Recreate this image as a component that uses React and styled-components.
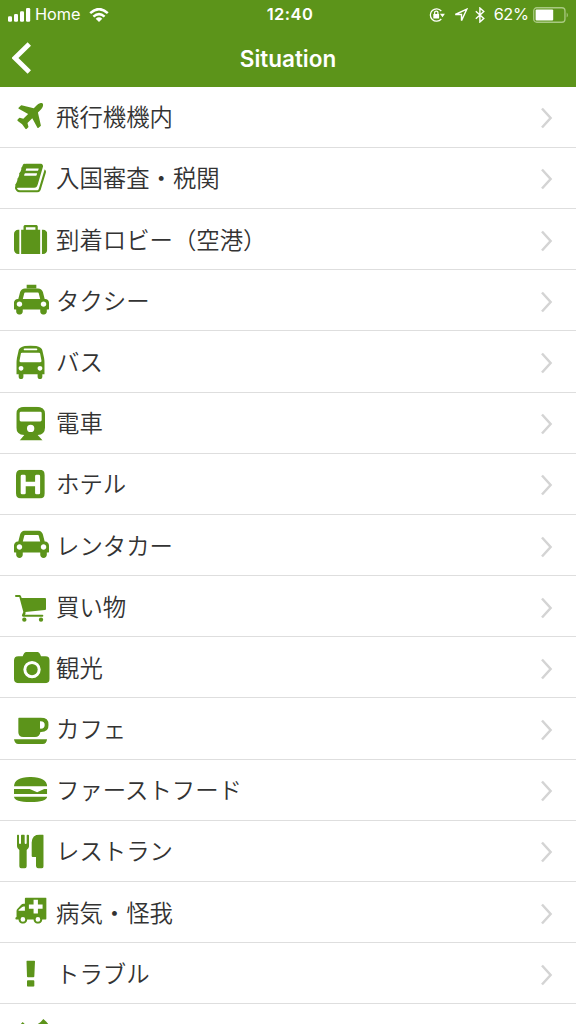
import React from "react";
import styled, { createGlobalStyle } from "styled-components";

const CAR =
  "M480 1088q0-66-47-113t-113-47-113 47-47 113 47 113 113 47 113-47 47-113zm36-320h1016l-89-357q-2-8-14-17.5t-21-9.5h-768q-9 0-21 9.5t-14 17.5zm1372 320q0-66-47-113t-113-47-113 47-47 113 47 113 113 47 113-47 47-113zm160-96v384q0 14-9 23t-23 9h-96v128q0 80-56 136t-136 56-136-56-56-136v-128h-1024v128q0 80-56 136t-136 56-136-56-56-136v-128h-96q-14 0-23-9t-9-23v-384q0-93 65.5-158.5t158.5-65.5h28l105-419q23-94 104-157.5t179-63.5h768q98 0 179 63.5t104 157.5l105 419h28q93 0 158.5 65.5t65.5 158.5z";

// left / top / width / height of each icon inside its row
const situations = [
  {
    label: "飛行機機内",
    frame: [17.2, 17, 26, 26.2],
    viewBox: "191 136 1405 1400",
    icon: (
      <path d="M1568 160q44 52 12 148t-108 172l-161 161 160 696q5 19-12 33l-128 96q-7 6-19 6-4 0-7-1-15-3-21-16l-279-508-259 259 53 194q5 17-8 31l-96 96q-9 9-23 9h-2q-15-2-24-13l-189-252-252-189q-11-7-13-23-1-13 9-25l96-97q9-9 23-9 6 0 8 1l194 53 259-259-508-279q-14-8-17-24-2-16 9-27l128-128q14-13 30-8l665 159 160-160q76-76 172-108t148 12z" />
    ),
  },
  {
    label: "入国審査・税関",
    frame: [15, 16.6, 31, 29],
    viewBox: "63 128 1667 1536",
    icon: (
      <path d="M1703 478q40 57 18 129l-275 906q-19 64-76.5 107.5t-122.5 43.5h-923q-77 0-148.5-53.5t-99.5-131.5q-24-67-2-127 0-4 3-27t4-37q1-8-3-21.5t-3-19.5q2-11 8-21t16.5-23.5 16.5-23.5q23-38 45-91.5t30-91.5q3-10 .5-30t-.5-28q3-11 17-28t17-23q21-36 42-92t25-90q1-9-2.5-32t.5-28q4-13 22-30.5t22-22.5q19-26 42.5-84.5t27.5-96.5q1-8-3-25.5t-2-26.5q2-8 9-18t18-23 17-21q8-12 16.5-30.5t15-35 16-36 19.5-32 26.5-23.5 36-11.5 47.5 5.5l-1 3q38-9 51-9h761q74 0 114 56t18 130l-274 906q-36 119-71.5 153.5t-128.5 34.5h-869q-27 0-38 15-11 16-1 43 24 70 144 70h923q29 0 56-15.5t35-41.5l300-987q7-22 5-57 38 15 59 43zm-1064 2q-4 13 2 22.5t20 9.5h608q13 0 25.5-9.5t16.5-22.5l21-64q4-13-2-22.5t-20-9.5h-608q-13 0-25.5 9.5t-16.5 22.5zm-83 256q-4 13 2 22.5t20 9.5h608q13 0 25.5-9.5t16.5-22.5l21-64q4-13-2-22.5t-20-9.5h-608q-13 0-25.5 9.5t-16.5 22.5z" />
    ),
  },
  {
    label: "到着ロビー（空港）",
    frame: [14, 16.9, 33.3, 29],
    viewBox: "0 128 1792 1536",
    icon: (
      <path d="M640 384h512v-128h-512v128zm-352 0v1280h-64q-92 0-158-66t-66-158v-832q0-92 66-158t158-66h64zm1120 0v1280h-1024v-1280h128v-160q0-40 28-68t68-28h576q40 0 68 28t28 68v160h128zm384 224v832q0 92-66 158t-158 66h-64v-1280h64q92 0 158 66t66 158z" />
    ),
  },
  {
    label: "タクシー",
    frame: [14, 14.4, 35, 30.3],
    viewBox: "0 -115 2048 1843",
    icon: (
      <>
        <path d={CAR} />
        <path d="M741-115H1307V140H741z" />
      </>
    ),
  },
  {
    label: "バス",
    frame: [16.3, 14.5, 28.4, 33.6],
    viewBox: "128 0 1536 1792",
    icon: (
      <path d="M512 1216q0-53-37.5-90.5t-90.5-37.5-90.5 37.5-37.5 90.5 37.5 90.5 90.5 37.5 90.5-37.5 37.5-90.5zm1024 0q0-53-37.5-90.5t-90.5-37.5-90.5 37.5-37.5 90.5 37.5 90.5 90.5 37.5 90.5-37.5 37.5-90.5zm-46-396l-72-384q-5-23-22.5-37.5t-40.5-14.5h-918q-23 0-40.5 14.5t-22.5 37.5l-72 384q-5 30 14 53t49 23h1062q30 0 49-23t14-53zm-226-612q0-20-14-34t-34-14h-640q-20 0-34 14t-14 34 14 34 34 14h640q20 0 34-14t14-34zm400 725v603h-128v128q0 53-37.5 90.5t-90.5 37.5-90.5-37.5-37.5-90.5v-128h-768v128q0 53-37.5 90.5t-90.5 37.5-90.5-37.5-37.5-90.5v-128h-128v-603q0-112 25-223l103-454q9-78 97.5-137t230-89 312.5-30 312.5 30 230 89 97.5 137l105 454q23 102 23 223z" />
    ),
  },
  {
    label: "電車",
    frame: [16.3, 14.7, 28.7, 33.7],
    viewBox: "49 224 86 101",
    icon: (
      <path
        fillRule="evenodd"
        d="M75 224H109Q135 224 135 245V287Q135 307 113 309L128 325H59L73 309Q49 307 49 287V245Q49 224 75 224ZM63 239Q59 239 59 243V264Q59 268 63 268H121Q125 268 125 264V243Q125 239 121 239ZM92 278A11 11 0 1 0 92 300A11 11 0 1 0 92 278Z"
      />
    ),
  },
  {
    label: "ホテル",
    frame: [16, 16.8, 28.8, 28.8],
    viewBox: "48 48 86 86",
    icon: (
      <path
        fillRule="evenodd"
        d="M64 48H118Q134 48 134 64V118Q134 134 118 134H64Q48 134 48 118V64Q48 48 64 48ZM66 63Q62 63 62 67V117Q62 121 66 121H73Q77 121 77 117V97H105V117Q105 121 109 121H116Q120 121 120 117V67Q120 63 116 63H109Q105 63 105 67V84H77V67Q77 63 73 63Z"
      />
    ),
  },
  {
    label: "レンタカー",
    frame: [14, 16.6, 35, 27.4],
    viewBox: "0 128 2048 1600",
    icon: <path d={CAR} />,
  },
  {
    label: "買い物",
    frame: [15, 19, 31, 27],
    viewBox: "45 56 93 81",
    icon: (
      <>
        <path d="M48 56H59Q63 56 65 65H135Q138 65 138 68V98Q138 101 135 101L76 107Q78 111 75 115H127Q130 115 130 118T127 121H69Q65 121 66 116L70 107L58 62H48Q45 62 45 59T48 56Z" />
        <circle cx="73" cy="130" r="6.5" />
        <circle cx="123" cy="130" r="6.5" />
      </>
    ),
  },
  {
    label: "観光",
    frame: [14, 14.9, 35.7, 31.3],
    viewBox: "42 227 107 94",
    icon: (
      <>
        <path
          fillRule="evenodd"
          d="M80 227H111Q117 227 120 233L123 240H136Q149 240 149 253V308Q149 321 136 321H55Q42 321 42 308V253Q42 240 55 240H68L71 233Q74 227 80 227ZM96 254A26 26 0 1 0 96 306A26 26 0 1 0 96 254Z"
        />
        <circle cx="96" cy="280" r="17" />
      </>
    ),
  },
  {
    label: "カフェ",
    frame: [14, 19.6, 34.7, 26.4],
    viewBox: "42 59 104 79",
    icon: (
      <path
        fillRule="evenodd"
        d="M58 59H122Q146 59 146 81T121 102V103Q119 117 105 117H70Q55 117 55 103V62Q55 59 58 59ZM120 70V92Q134 93 134 81T120 70ZM42 124H141Q140 138 128 138H55Q44 138 42 124Z"
      />
    ),
  },
  {
    label: "ファーストフード",
    frame: [14, 18, 33.2, 25],
    viewBox: "42 238 99 75",
    icon: (
      <path d="M42 266Q43 238 91 238T141 266ZM42 274H89L111 284L132 274H141V289H42ZM42 297H141Q139 313 91 313T42 297Z" />
    ),
  },
  {
    label: "レストラン",
    frame: [17, 14.6, 26.7, 34],
    viewBox: "51 45 80 102",
    icon: (
      <path d="M54 45Q57 45 57 48V70Q57 73 60 73T63 70V48Q63 45 66 45H71Q74 45 74 48V70Q74 73 77 73T80 70V48Q80 45 83 45T87 48V80Q87 87 80 91V139Q80 147 69 147T58 139V91Q51 87 51 80V48Q51 45 54 45ZM119 45H128Q131 45 131 48V139Q131 147 120 147T108 139V112H98Q95 112 95 109V69Q96 45 119 45Z" />
    ),
  },
  {
    label: "病気・怪我",
    frame: [15.2, 16.4, 31.4, 26.4],
    viewBox: "46 234 94 79",
    icon: (
      <path
        fillRule="evenodd"
        d="M78 234H137Q140 234 140 237V297Q140 300 137 300H127A13 13 0 0 1 101 300H82A13 13 0 0 1 56 300H49Q46 300 46 297T50 293V275Q50 271 53 268L64 256Q67 253 71 253H75V237Q75 234 78 234ZM56 274H75V261H71Q69 261 67 263L56 272ZM101 241V255H87V268H101V282H114V268H128V255H114V241ZM69 293A7 7 0 1 0 69 307A7 7 0 1 0 69 293ZM114 293A7 7 0 1 0 114 307A7 7 0 1 0 114 293Z"
      />
    ),
  },
  {
    label: "トラブル",
    frame: [26.3, 17.5, 8.7, 26.2],
    viewBox: "79 55 26 78",
    icon: (
      <path d="M82 55H102Q105 55 105 58L103 102Q103 105 100 105H84Q81 105 81 102L79 58Q79 55 82 55ZM84 114H100Q103 114 103 117V130Q103 133 100 133H84Q81 133 81 130V117Q81 114 84 114Z" />
    ),
  },
  {
    label: "",
    frame: [20, 15, 29, 10],
    viewBox: "60 231 87 30",
    icon: <path d="M60 249L68 240L76 248L90 261H60ZM112 247L119 242L122 240L130 231L139 239L147 249V261H100Z" />,
  },
];

function Row({ label, frame, viewBox, icon }) {
  const [x, y, w, h] = frame;
  return (
    <Item>
      <IconSlot viewBox="0 0 56 61.2">
        <svg
          x={x}
          y={y}
          width={w}
          height={h}
          viewBox={viewBox}
          preserveAspectRatio="none"
        >
          {icon}
        </svg>
      </IconSlot>
      <Label>{label}</Label>
      {label && (
        <Chevron viewBox="0 0 14 24">
          <path d="M2 2.5L10.6 12L2 21.5" />
        </Chevron>
      )}
    </Item>
  );
}

function App() {
  return (
    <Screen>
      <GlobalStyle />
      <Header>
        <StatusBar>
          <Side>
            <Signal viewBox="0 0 23 14">
              <rect x="0" y="8.2" width="4" height="5.6" rx="1.2" />
              <rect x="6" y="6" width="4" height="7.8" rx="1.2" />
              <rect x="12" y="3.2" width="4" height="10.6" rx="1.2" />
              <rect x="18" y="0" width="4.2" height="13.8" rx="1.2" />
            </Signal>
            <Carrier>Home</Carrier>
            <Wifi viewBox="0 0 20 14">
              <path d="M1.2 5.2Q10-3 18.8 5.2" />
              <path d="M4.4 8.6Q10 3.6 15.6 8.6" />
              <path className="dot" d="M6.7 10.7Q10 8 13.3 10.7L10 14z" />
            </Wifi>
          </Side>
          <Clock>12:40</Clock>
          <Side $end>
            <Lock viewBox="0 0 16 14">
              <path d="M12.3 3A6.2 6.2 0 1 0 12.3 11" />
              <path d="M5.6 6V4.7a1.6 1.6 0 0 1 3.3 0V6" />
              <path className="solid" d="M4.3 6h5.8v4.4H4.3zM10.9 5.8h5l-2.4 3.4z" />
            </Lock>
            <Location viewBox="0 0 14 14">
              <path d="M12.8 1.2L1.3 6.5H7.5V12.6z" />
            </Location>
            <Bluetooth viewBox="0 0 10 16">
              <path d="M.8 4.3L8.8 11.4L4.9 15V1L8.8 4.6L.8 11.7" />
            </Bluetooth>
            <Percent>62%</Percent>
            <Battery viewBox="0 0 36 16">
              <rect className="shell" x=".75" y=".75" width="31.2" height="14.5" rx="3" />
              <rect x="2.6" y="2.6" width="17.6" height="10.8" rx="1" />
              <path className="cap" d="M33.7 5.4Q36 8 33.7 10.6z" />
            </Battery>
          </Side>
        </StatusBar>
        <NavBar>
          <Back viewBox="0 0 20 32">
            <path d="M17.3 2L3 16L17.3 30" />
          </Back>
          <Title>Situation</Title>
          <span />
        </NavBar>
      </Header>
      <List>
        {situations.map((item, i) => (
          <Row key={i} {...item} />
        ))}
      </List>
    </Screen>
  );
}

export default App;

const GlobalStyle = createGlobalStyle`
  * {
    box-sizing: border-box;
  }
  body {
    margin: 0;
    background: #fff;
    overflow: hidden;
  }
`;
const Screen = styled.div`
  width: 576px;
  height: 1024px;
  overflow: hidden;
  background: #fff;
  font-family: Inter, "Noto Sans CJK JP", sans-serif;
`;
const Header = styled.header`
  height: 87px;
  background: #5c941a;
  color: #fff;
`;
const StatusBar = styled.div`
  height: 29px;
  display: grid;
  grid-template-columns: 1fr auto 1fr;
  align-items: center;
  padding: 0 7px 0 8px;
  font-size: 17px;
  line-height: 29px;

  svg {
    fill: #fff;
    flex: none;
  }
`;
const Side = styled.div`
  display: flex;
  align-items: center;
  justify-content: ${(props) => (props.$end ? "flex-end" : "flex-start")};
`;
const Signal = styled.svg`
  width: 23px;
  height: 14px;
`;
const Carrier = styled.span`
  margin: 0 8px 0 4px;
  font-size: 16.3px;
`;
const Wifi = styled.svg`
  width: 20px;
  height: 14px;

  path {
    fill: none;
    stroke: #fff;
    stroke-width: 2.5;
  }
  .dot {
    fill: #fff;
    stroke: none;
  }
`;
const Clock = styled.div`
  padding-left: 3px;
  font-size: 16.5px;
  font-weight: 600;
  letter-spacing: 0.45px;
`;
const Lock = styled.svg`
  width: 16px;
  height: 14px;
  margin-right: 9px;

  path {
    fill: none;
    stroke: #fff;
    stroke-width: 1.3;
  }
  .solid {
    fill: #fff;
    stroke: none;
  }
`;
const Location = styled.svg`
  width: 14px;
  height: 14px;
  margin-right: 7px;

  path {
    fill: none;
    stroke: #fff;
    stroke-width: 1.4;
  }
`;
const Bluetooth = styled(Location)`
  width: 10px;
  height: 16px;
  margin-right: 9px;
`;
const Percent = styled.span`
  font-size: 16.3px;
  letter-spacing: -0.4px;
  margin-right: 4.5px;
`;
const Battery = styled.svg`
  width: 36px;
  height: 16px;

  .shell {
    fill: none;
    stroke: #a9c982;
    stroke-width: 1.3;
  }
  .cap {
    fill: #a9c982;
  }
`;
const NavBar = styled.div`
  height: 58px;
  display: grid;
  grid-template-columns: 1fr auto 1fr;
  align-items: center;
  padding: 0 12px;
`;
const Back = styled.svg`
  width: 20px;
  height: 32px;

  path {
    fill: none;
    stroke: #fff;
    stroke-width: 4.8;
  }
`;
const Title = styled.h1`
  margin: 0;
  font-size: 22.5px;
  font-weight: 600;
  line-height: 57px;
`;
const List = styled.ul`
  margin: -0.4px 0 0;
  padding: 0;
  list-style: none;
`;
const Item = styled.li`
  height: 61.2px;
  display: flex;
  align-items: center;
  border-bottom: 1px solid #dedede;
`;
const IconSlot = styled.svg`
  width: 56px;
  height: 61.2px;
  flex: none;
  align-self: flex-start;
  margin-top: -0.6px;
  fill: #5c941a;
`;
const Label = styled.span`
  flex: 1;
  font-family: "Noto Sans CJK JP", sans-serif;
  font-size: 23.4px;
  font-weight: 350;
  line-height: 60px;
  margin-top: -1px;
  color: #333;
  white-space: nowrap;
`;
const Chevron = styled.svg`
  width: 14px;
  height: 24px;
  margin: 3px 22px 0 0;

  path {
    fill: none;
    stroke: #d4d4d4;
    stroke-width: 2.5;
  }
`;
